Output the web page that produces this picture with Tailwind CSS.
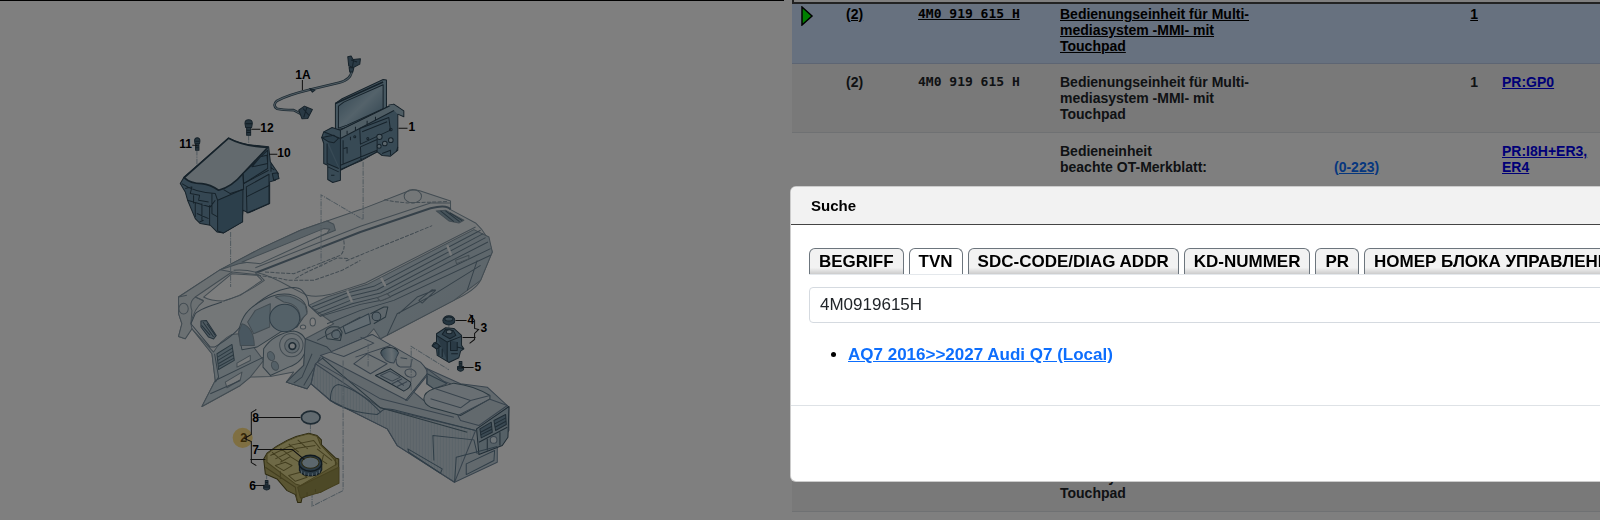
<!DOCTYPE html>
<html lang="de">
 <head>
  <meta charset="utf-8"/>
  <meta content="width=device-width, initial-scale=1" name="viewport"/>
  <title>
   Teilekatalog
  </title>
  <script src="https://cdn.jsdelivr.net/npm/@tailwindcss/browser@4"></script>
 </head>
 <body class="bg-white font-['Liberation_Sans',Arial,sans-serif] text-[#212529] h-screen overflow-hidden flex">
  <!-- Illustration -->
  <section class="w-[49.5%] shrink-0 pr-2">
   <div class="border-t border-black">
    <svg aria-label="Bildtafel" class="block w-full" role="img" viewBox="0 1 783 519">
     <defs>
      <linearGradient id="screen" x1="0" x2="1" y1="0" y2="1">
       <stop offset="0" stop-color="#5f87a0"/><stop offset=".5" stop-color="#a9c6d6"/><stop offset="1" stop-color="#587f98"/>
      </linearGradient>
      <linearGradient id="face" x1="0" x2="1" y1="0" y2="1">
       <stop offset="0" stop-color="#c9d8e0"/><stop offset="1" stop-color="#b3c6d1"/>
      </linearGradient>
      <linearGradient id="bin" x1="0" x2="1" y1="0" y2="0">
       <stop offset="0" stop-color="#7fa0b3"/><stop offset=".6" stop-color="#cddde6"/><stop offset="1" stop-color="#8fafc0"/>
      </linearGradient>
      <pattern height="8" id="hatch" patternUnits="userSpaceOnUse" width="9">
       <path d="M3 0V8" stroke="#a9bfcb" stroke-width="1.5"/>
      </pattern>
     </defs>
     <!-- Dashboard -->
     <g fill="none" stroke="#8598a4" stroke-linejoin="round" stroke-width="3" transform="translate(160 180) scale(.3333)">
      <path d="M55 350 180 268 300 205 420 150 500 122 600 88 740 34Q760 26 780 32L870 62V88L945 128Q985 165 995 215L960 300Q945 330 880 360L660 475 610 480 500 520 440 625 378 605 400 575 330 588 270 590 240 615 125 678 165 600 155 520 95 445 75 475 55 468 65 430 55 400Z" fill="#e9eef1"/>
      <path d="M55 350 180 268 215 275 105 350 130 362Q100 385 92 430L95 445 75 475 55 468 65 430 55 400Z" fill="#d7e0e5"/>
      <path d="M445 375 500 350 620 312 940 148 985 170 995 215 960 300 880 360 660 475 640 445 610 480 500 520 440 625 378 605 430 555 435 475 520 430Z" fill="url(#face)"/>
      <path d="M95 445 160 515Q180 480 215 462L235 460 280 500 310 540 270 590 240 615 125 678 165 600 155 520Z" fill="#c9d8e0"/>
      <path d="M180 268 300 205 420 150 500 122 520 132 525 150 300 240 235 250Z" fill="#b3c4ce"/>
      <path d="M245 245 490 145 508 147 500 158 300 250Z" fill="#f0f5f7"/>
      <path d="M130 350 215 280 290 285 305 300 240 345 190 362Q150 362 130 350Z" fill="#fafcfd"/>
      <path d="M285 278 600 155 810 84Q860 72 870 88" stroke="#6c8393" stroke-width="6"/>
      <path d="M285 262 600 138 810 68 870 68M220 270Q290 262 390 320L440 345Q470 352 510 342L615 308 945 140M55 350 80 345M190 362Q250 345 312 300L295 283 215 275M105 350 130 360M105 350Q85 365 95 390L92 430"/>
      <path d="M290 285Q340 290 385 300H460L545 270 600 240M405 295 430 280 530 233 565 235M550 180Q555 210 540 225L400 280 310 275M556 242 815 136M672 58 700 64 740 68 860 64" stroke-dasharray="12 4"/>
      <ellipse cx="757" cy="48" rx="26" ry="20"/>
      <path d="M827 92 855 90 910 120 895 128 865 122Z" fill="#8fa8b6"/>
      <path d="M840 92 880 124M855 92 897 124M868 98 905 121" stroke="#4d6677"/>
      <path d="M92 430 105 400Q120 385 185 365M92 430 150 500 163 500Q230 460 245 430 270 370 345 335 405 310 425 330 445 350 445 375" stroke="#6c8393"/>
      <path d="M235 460Q240 400 290 370 350 330 400 345 440 360 440 395L410 440 360 455 290 500 245 508Z" fill="#d3dfe6" stroke="#68808f"/>
      <path d="M245 430Q280 440 282 495L240 495 235 455Z" fill="#92afc1"/>
      <path d="M285 390 330 370 328 440 280 460 262 425Z" fill="#a8c2d1"/>
      <path d="M345 350Q395 335 435 375L440 400 420 420Q420 370 370 365Z" fill="#b9cfdb"/>
      <ellipse cx="373" cy="413" fill="#a8c2d1" rx="45" ry="41" stroke="#5f7b8e"/>
      <path d="M122 422 138 420 168 465 160 476 145 470 122 440Z" fill="#9db5c3" stroke="#4d6677"/>
      <path d="M128 425 160 470M124 435 150 465M140 430 165 465" stroke="#4d6677"/>
      <path d="M170 520 215 492 222 540 175 567Z" fill="#9fb8c7" stroke="#55707f"/>
      <path d="M172 530 216 503M173 540 218 513M174 550 220 523M175 558 221 533" stroke="#55707f"/>
      <path d="M195 605 245 575 240 598 200 622ZM230 548 270 525V540L230 560Z" fill="#eef4f7"/>
      <path d="M165 600 310 530M150 640 240 600M163 520 175 590 165 605" stroke="#6c8393"/>
      <!-- Steering column -->
      <path d="M310 505Q340 460 400 452 440 460 438 500 430 545 385 560L330 585 308 560Z" fill="#d6e2e9" stroke="#68808f"/>
      <circle cx="393" cy="494" r="35"/><circle cx="395" cy="496" fill="#c3d5df" r="22"/>
      <circle cx="396" cy="497" fill="#edf3f6" r="10" stroke="#40596a" stroke-width="5"/>
      <ellipse cx="332" cy="527" fill="#a9c0ce" rx="10" ry="14" transform="rotate(-25 332 527)"/>
      <ellipse cx="344" cy="556" fill="#a9c0ce" rx="10" ry="14" transform="rotate(-25 344 556)"/>
      <path d="M435 475 500 500 520 520 440 625 378 605 430 555Z" fill="#b3c6d1" stroke="#6c8393"/>
      <path d="M455 520 425 590 400 608M480 530 430 615" stroke="#6c8393"/>
      <!-- Vents along the front edge -->
      <path d="M455 380 560 338 640 318 960 150M462 390 560 350 650 328 968 160M470 400 570 360 660 338 975 172M480 405 575 370 665 348 982 185M445 375 480 408 600 372 670 358 990 205M500 430 600 390 700 360 990 225" stroke="#6c8393"/>
      <path d="M560 330 575 365M662 292 675 318M860 195 872 225" stroke="#eef3f5" stroke-width="7"/>
      <path d="M885 240 925 225V235L888 250ZM650 352 680 340 690 350 660 362Z" fill="#c0d0da"/>
      <path d="M548 438 625 400 630 430 555 460Z" fill="#c5d9e4" stroke="#5f7b8e"/>
      <path d="M495 455Q500 435 535 440L545 455 540 480 500 475ZM630 400 670 380 682 380 675 410 640 430" stroke="#55707f"/>
      <circle cx="527" cy="462" fill="#b1c8d6" r="13" stroke="#4d6677"/>
      <circle cx="648" cy="408" fill="#b1c8d6" r="13" stroke="#4d6677"/>
      <path d="M680 465 710 400 820 342 960 255M715 400 770 350 825 328M775 360 815 328 825 330 785 368ZM920 330 950 240M470 480 600 410" stroke="#6c8393"/>
      <ellipse cx="457" cy="425" fill="#fff" rx="8" ry="12"/><ellipse cx="428" cy="440" fill="#fff" rx="8" ry="6"/>
      <ellipse cx="70" cy="385" rx="14" ry="16"/>
     </g>
     <!-- Centre console -->
     <g fill="none" stroke="#71879a" stroke-linejoin="round" stroke-width="3" transform="translate(220 320) scale(.3333)">
      <path d="M272 190 285 130 330 95 455 42 620 145 720 190 800 200 865 260V330L830 375V425L702 485 530 375 500 325 330 240Z" fill="#c4d2db"/>
      <path d="M272 190 285 130 480 262 765 330 702 485 530 375 500 325 330 240Z" fill="url(#hatch)"/>
      <path d="M330 95 455 42 600 125Q625 150 620 165L560 240 300 105Z" fill="#dde6eb"/>
      <path d="M305 112 480 262 740 335" stroke="#55707f"/>
      <path d="M290 125 480 235 700 290M330 95 370 108 460 68 420 50M400 130 440 100 500 130 450 160ZM405 110 510 75"/>
      <path d="M465 165 510 145 570 185Q575 200 550 212L520 195Z" fill="#c1d3de" stroke="#40596a"/>
      <path d="M480 165 508 152 540 170 515 182ZM515 190 545 175M530 198 560 183M530 180 550 195"/>
      <ellipse cx="507" cy="97" fill="url(#bin)" rx="26" ry="16" stroke="#40596a"/>
      <path d="M482 97Q490 125 520 128L535 95" fill="url(#bin)"/>
      <path d="M527 115Q525 135 540 140H570L575 115M540 112 560 115"/>
      <ellipse cx="570" cy="158" rx="17" ry="12" transform="rotate(15 570 158)"/>
      <path d="M580 215 620 165 690 190 620 240 610 240Z" fill="#fff"/>
      <path d="M620 145 680 190 640 205 618 190Z" fill="#b3c6d1"/>
      <path d="M555 240 620 160 680 190M620 165V190L640 205M330 240Q330 195 355 192 420 210 480 275L470 282Q380 275 330 240ZM480 275Q490 260 520 268L765 330" stroke="#5f7b8e"/>
      <path d="M610 235Q610 215 640 205L700 188Q760 195 808 225V235L720 285 630 260Q610 250 610 235Z" fill="#d3dfe6" stroke="#55707f"/>
      <path d="M645 205 750 240 720 262 630 235M750 240 808 225M712 285 808 236 860 255 775 315 720 300Z"/>
      <path d="M768 325 865 258 862 350 845 375 775 402Z" fill="#abc0cc" stroke="#40596a"/>
      <path d="M778 325 812 305 815 335 782 352ZM820 300 855 282 857 312 825 330Z" fill="#7593a6" stroke="#40596a"/>
      <path d="M780 335 814 317M780 343 814 326M822 310 856 292M823 320 856 302M775 365 860 320M800 355V390M838 335V375" stroke="#40596a"/>
      <circle cx="819" cy="358" fill="#dce8ee" r="10"/>
      <path d="M640 420 637 345 760 358 770 400M702 485 707 410 830 378M737 430 822 390 820 420 737 462ZM562 385 665 445 660 458 565 395Z" stroke="#5f7b8e"/>
     </g>
     <!-- Assembly axes -->
     <g fill="none" stroke="#9fb2be" stroke-dasharray="16 3 4 3" stroke-width="3" transform="translate(160 40) scale(.3333)">
      <path d="M110 330V430M265 285V310M211 575V740M608 365V538L482 464V680M752 1050V918L865 988"/>
      <path d="M548 960V1350L455 1397V1290M623 910V980M450 1150V1180M319 1300V1320M865 855V880"/>
     </g>
     <g fill="none" stroke="#2c4454" stroke-linejoin="round" stroke-width="3" transform="translate(160 40) scale(.3333)">
      <!-- 1A cable -->
      <path d="M574 88Q575 118 535 128L450 148Q380 165 350 182 335 195 350 206 365 210 400 210L428 225" stroke="#3f5868" stroke-width="8"/>
      <path d="M574 88Q575 118 535 128L450 148Q380 165 350 182 335 195 350 206 365 210 400 210L428 225" stroke="#9db5c3" stroke-width="3"/>
      <path d="M562 50 572 48 578 58 600 56 598 72 580 82 565 78ZM415 210 432 198 456 208 442 235 425 236ZM448 145 464 150 456 156ZM566 82 580 84 577 96H568Z" fill="#54748a"/>
      <path d="M572 60 590 66M580 58 576 80M428 205 445 225M440 200 430 232"/>
      <!-- 1 display unit -->
      <path d="M525 270V190L545 176 668 118 678 120V205L560 262Z" fill="#8fb0c3"/>
      <path d="M534 264V198L550 186 668 134V206L560 255Z" fill="url(#screen)"/>
      <path d="M525 190 668 126" stroke-width="5"/>
      <path d="M490 275 515 262 540 270 690 196 712 200V330L690 348 665 346 650 335 540 390V420L517 427 502 418V375L490 370V310L484 292Z" fill="#7094ab"/>
      <path d="M540 270 690 196 712 205 540 295Z" fill="#9fbac9"/>
      <path d="M490 275 540 295V390M500 310V370L535 385M484 292 520 285 534 295 520 308 505 305Z" fill="#5b8099"/>
      <path d="M684 195 700 192 730 212V230L712 222M712 320 708 334" fill="#9fbac9"/>
      <path d="M598 265 685 232 690 270 600 312ZM600 320 650 298V335L602 362ZM540 375 650 330M548 300V370M570 290V300M550 325 560 322V340M605 275 680 245M560 272V282M585 260V270M620 242V252M645 230V240M602 362 540 388"/>
      <circle cx="657" cy="290" fill="#a8c2d1" r="8"/><circle cx="673" cy="310" fill="#b9cfdb" r="7"/><circle cx="691" cy="300" fill="#a8c2d1" r="7"/><circle cx="656" cy="318" fill="#a8c2d1" r="6"/><circle cx="691" cy="268" r="4"/><circle cx="622" cy="295" r="3"/><circle cx="583" cy="290" r="3"/>
      <path d="M502 380 535 395M512 405H522M665 340 690 330V345"/>
      <!-- 10 control box -->
      <path d="M60 430 72 410 205 294Q245 315 290 316L325 320 330 365 354 400 345 420 328 425V490L265 518 248 510 245 545 190 578 170 575 150 555 120 550 105 535 82 480 75 455Z" fill="#6b8fa6"/>
      <path d="M72 412 205 294Q250 318 322 322L248 400Q215 440 175 450 150 432 125 430 90 430 72 412Z" fill="#c6d5dd" stroke-width="5"/>
      <path d="M172 480 248 447 247 545 190 578 172 572Z" fill="#587e96"/>
      <path d="M258 440 326 402V490L260 518ZM248 400 322 330V385L250 430ZM275 380 300 350 320 345 322 370Z" fill="#648aa2"/>
      <path d="M258 470 328 435M248 400 250 447 210 460 190 448M65 430Q100 455 165 460L172 480M82 480 150 500 165 480M75 445 95 440 90 460 118 465 115 480 145 485M105 485V530M125 490V540M148 495V555M110 520 145 535M155 460V520L172 530M100 465V490M118 545 130 540M250 430 325 390"/>
      <path d="M332 370V395M336 400 352 398 356 415 340 420ZM330 380 342 390" fill="#587e96"/>
      <!-- screws -->
      <path d="M103 302Q103 293 111 293 119 293 119 302L118 310H104ZM106 310H116V330H106ZM254 250Q254 239 265 239 276 239 276 250L274 262H256ZM259 262H271V285H259Z" fill="#4f6c7e"/>
      <path d="M105 303H118M256 251H275M106 317H116M106 323H116M259 270H271M259 277H271" stroke="#233744"/>
      <path d="M315 1320H323V1333H315ZM310 1334H328V1344Q319 1352 310 1344ZM896 963H904V977H896ZM891 978H909V988Q900 997 891 988Z" fill="#4f6c7e"/>
      <path d="M315 1326H323M310 1339H328M896 970H904M891 983H909" stroke="#233744"/>
      <!-- 3, 4 switch -->
      <ellipse cx="865" cy="840" fill="#4b6c82" rx="18" ry="14"/>
      <ellipse cx="865" cy="836" fill="#7898ab" rx="12" ry="6"/>
      <path d="M828 880 855 862 880 864 903 885V915L910 925 900 932 895 952 865 966 830 945 828 925 815 917 820 908 828 905Z" fill="#6d90a6"/>
      <path d="M845 882 855 867 878 870 886 885 868 895ZM828 885 860 905V962M860 905 903 888M815 915 828 908 840 918 828 926ZM870 900V930H890V905M835 915V945M845 925V950M872 940H892M890 920 910 925" fill="#54748a"/>
      <ellipse cx="866" cy="874" fill="#b9cfdb" rx="9" ry="6"/>
     </g>
     <!-- 2 highlighted unit -->
     <g fill="none" stroke="#5a5422" stroke-linejoin="round" stroke-width="3" transform="translate(220 320) scale(.3333)">
      <path d="M130 415 140 398Q200 350 265 338L290 345 303 358V372L345 412 355 415V488L340 492 300 515 275 520 245 532 242 546H232L225 522 200 510 170 475 135 460Z" fill="#b5ab64"/>
      <path d="M140 400Q200 352 265 340L290 347 300 372 340 415 350 430 240 495 225 490 140 425Z" fill="#dcd28c" stroke="#8d8340"/>
      <path d="M232 500 355 440V488L300 515 240 532Z" fill="#9b934e" stroke="#8d8340"/>
      <path d="M150 405 215 373 280 360 300 385M165 415 230 383 285 375M180 425 210 408 245 430M155 395 185 420M180 383 210 407M205 370 235 395M232 358 262 385M165 435 195 425 215 435 190 450ZM205 465 240 455 260 470 225 482ZM290 385 335 420M310 400 305 420 320 430M135 440 225 500 230 540M260 515V525M285 505V515M345 415V435M180 452V475" stroke="#867c3e"/>
      <path d="M237 430V450Q245 466 270 466 298 466 304 448V430" fill="#54748a" stroke="#20323e"/>
      <ellipse cx="270" cy="428" fill="#54748a" rx="34" ry="24" stroke="#20323e" stroke-width="4"/>
      <ellipse cx="270" cy="426" fill="#b9cfdb" rx="26" ry="17"/>
      <path d="M243 450V460M253 455V464M264 458V466M276 458V466M288 455V464M297 448V458" stroke="#a8c2d1"/>
      <ellipse cx="271" cy="291" fill="#c3d5df" rx="28" ry="19" stroke="#3f5868" stroke-width="5"/>
      <circle cx="67" cy="352" fill="#ffdf84" r="30" stroke="none"/>
     </g>
     <!-- leader lines -->
     <g fill="none" stroke="#202020" stroke-width="1">
      <path d="M302 80V90M398 128H407M251 129H260M192 145H197M269 154H277M455 320H466M462 337H475M469 314 474 320V328L478 329 474 333V339L469 343M461 367H473"/>
      <path d="M256 409 251 412V434L244 438 251 441V462L256 465M250 459H265M257 417H300M257 449H292L304 459M254 485H264M246 435V440"/>
     </g>
     <g class="font-bold text-[12px]" fill="#000">
      <text x="295" y="79">1A</text>
      <text x="408" y="131">1</text>
      <text x="179" y="148">11</text>
      <text x="260" y="132">12</text>
      <text x="277" y="157">10</text>
      <text x="467" y="324">4</text>
      <text x="480" y="332">3</text>
      <text x="474" y="371">5</text>
      <text x="252" y="421">8</text>
      <text fill="#6b5010" x="240" y="441">2</text>
      <text x="252" y="453">7</text>
      <text x="249" y="489">6</text>
     </g>
    </svg>
   </div>
  </section>
  <!-- Parts list -->
  <section class="grow min-w-0">
   <div class="h-1 border-b-2 border-l-2 border-[#444444]">
   </div>
   <table class="w-full table-fixed border-collapse text-sm leading-4 font-bold">
    <colgroup>
     <col class="w-[54px]"/>
     <col class="w-[72px]"/>
     <col class="w-[142px]"/>
     <col class="w-[274px]"/>
     <col class="w-[84px]"/>
     <col class="w-[84px]"/>
     <col/>
    </colgroup>
    <tbody class="align-top">
     <tr class="bg-[#cfe2ff] text-black underline border-b border-[#bacbe6]">
      <td class="pl-2 pt-0.5">
       <svg class="block" height="20" viewBox="0 0 14 20" width="14"><path d="M2 1 12 10 2 19Z" fill="#00ff00" stroke="#000" stroke-width="1.5"/></svg>
      </td>
      <td class="pt-0.5 pb-[9px]">(2)</td>
      <td class="pt-0.5 pb-[9px] font-['DejaVu_Sans_Mono',monospace] text-[13px]">4M0 919 615 H</td>
      <td class="pt-0.5 pb-[9px]">Bedienungseinheit für Multi-<br/>mediasystem -MMI- mit<br/>Touchpad</td>
      <td></td>
      <td class="pt-0.5 pb-[9px] pr-6 text-right">1</td>
      <td></td>
     </tr>
     <tr class="bg-[#f2f2f2] border-b border-[#dee2e6]">
      <td></td>
      <td class="py-2.5">(2)</td>
      <td class="py-2.5 font-['DejaVu_Sans_Mono',monospace] text-[13px]">4M0 919 615 H</td>
      <td class="py-2.5">Bedienungseinheit für Multi-<br/>mediasystem -MMI- mit<br/>Touchpad</td>
      <td></td>
      <td class="py-2.5 pr-6 text-right">1</td>
      <td class="py-2.5 -ml-0.5"><a class="text-[#0000ee] underline" href="#">PR:GP0</a></td>
     </tr>
     <tr class="h-[310px] border-b border-[#dee2e6]">
      <td></td>
      <td></td>
      <td></td>
      <td class="py-2.5">Bedieneinheit<br/>beachte OT-Merkblatt:</td>
      <td class="py-2.5"><br/><a class="text-[#0d6efd] underline" href="#">(0-223)</a></td>
      <td></td>
      <td class="py-2.5"><a class="text-[#0000ee] underline" href="#">PR:I8H+ER3,<br/>ER4</a></td>
     </tr>
     <tr class="bg-[#f2f2f2] border-b border-[#dee2e6]">
      <td></td>
      <td></td>
      <td></td>
      <td class="py-2.5">Bedienungseinheit für Multi-<br/>mediasystem -MMI- mit<br/>Touchpad</td>
      <td></td>
      <td></td>
      <td></td>
     </tr>
    </tbody>
   </table>
  </section>
  <!-- Search dialog -->
  <div class="fixed inset-0 bg-black/50 overflow-hidden">
   <div aria-labelledby="dialog-title" class="absolute top-[186px] left-[790px] -right-40 bg-white border border-black/20 rounded-md overflow-hidden text-black" role="dialog">
    <div class="bg-[#f2f2f2] border-b border-[#444444] px-5 py-2">
     <h2 class="text-[15px] leading-[21px] font-bold" id="dialog-title">Suche</h2>
    </div>
    <div class="px-[18px] pt-[23px] pb-[38px]">
     <div class="flex gap-[5px] border-b border-[#e4e8ec] text-[17px] leading-[25px] font-bold whitespace-nowrap" role="tablist">
      <button class="shrink-0 px-[9px] border border-b-0 border-[#6c757d] rounded-t-md bg-linear-to-b from-[#f2f2f2] from-75% to-[#cccccc]" role="tab" type="button">BEGRIFF</button>
      <button aria-selected="true" class="shrink-0 px-[9px] border border-b-0 border-[#6c757d] rounded-t-md bg-white" role="tab" type="button">TVN</button>
      <button class="shrink-0 px-[9px] border border-b-0 border-[#6c757d] rounded-t-md bg-linear-to-b from-[#f2f2f2] from-75% to-[#cccccc]" role="tab" type="button">SDC-CODE/DIAG ADDR</button>
      <button class="shrink-0 px-[9px] border border-b-0 border-[#6c757d] rounded-t-md bg-linear-to-b from-[#f2f2f2] from-75% to-[#cccccc]" role="tab" type="button">KD-NUMMER</button>
      <button class="shrink-0 px-[9px] border border-b-0 border-[#6c757d] rounded-t-md bg-linear-to-b from-[#f2f2f2] from-75% to-[#cccccc]" role="tab" type="button">PR</button>
      <button class="shrink-0 px-[9px] border border-b-0 border-[#6c757d] rounded-t-md bg-linear-to-b from-[#f2f2f2] from-75% to-[#cccccc]" role="tab" type="button">НОМЕР БЛОКА УПРАВЛЕНИЯ</button>
     </div>
     <input aria-label="TVN" class="block w-full mt-3 h-9 px-2.5 text-[17px] text-[#212529] border border-[#d5dae0] rounded" type="text" value="4M0919615H"/>
     <ul class="list-disc pl-[39px] mt-5 text-[17px] leading-6 font-bold">
      <li><a class="text-[#0d6efd] underline" href="#">AQ7 2016&gt;&gt;2027 Audi Q7 (Local)</a></li>
     </ul>
    </div>
    <div class="border-t border-[#dee2e6] h-[76px]">
    </div>
   </div>
  </div>
 </body>
</html>
